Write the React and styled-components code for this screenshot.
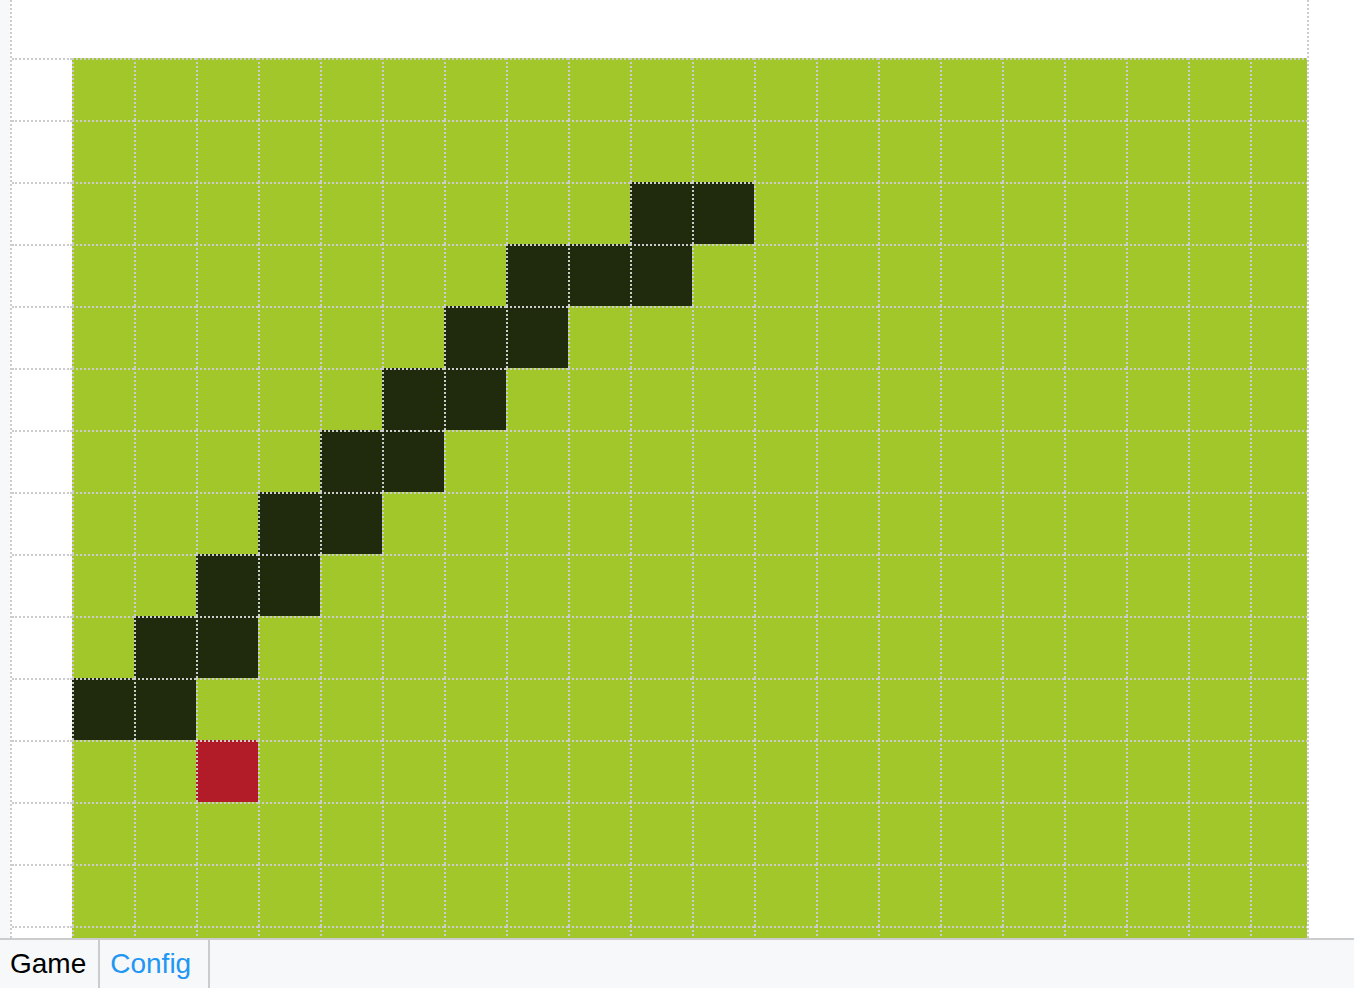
import React from "react";
import styled, { createGlobalStyle } from "styled-components";

const COLS = 21;
const ROWS = 15;
const SNAKE = [
  [2, 10], [2, 11],
  [3, 8], [3, 9], [3, 10],
  [4, 7], [4, 8],
  [5, 6], [5, 7],
  [6, 5], [6, 6],
  [7, 4], [7, 5],
  [8, 3], [8, 4],
  [9, 2], [9, 3],
  [10, 1], [10, 2],
];
const FOOD = [11, 3];

const GlobalStyle = createGlobalStyle`
  html, body {
    margin: 0;
    padding: 0;
    background: #ffffff;
    font-family: "Liberation Sans", Arial, sans-serif;
    overflow: hidden;
  }
`;

const Screen = styled.div`
  width: 1354px;
  height: 988px;
  display: flex;
  flex-direction: column;
`;

const Stage = styled.div`
  flex: 1;
  display: flex;
  min-height: 0;
`;

const Gutter = styled.div`
  width: 10px;
  background: #f7f8fa;
`;

const Board = styled.div`
  width: 1295px;
  border-left: 2px dotted #cccccc;
  border-right: 2px dotted #cccccc;
  padding-top: 58px;
  overflow: hidden;
  background: #ffffff;
`;

const Row = styled.div`
  display: flex;
  height: 62px;
`;

const colors = {
  empty: "#ffffff",
  field: "#a2c72b",
  snake: "#202a0c",
  food: "#b11c28",
};

const Cell = styled.div`
  flex: 0 0 ${(p) => (p.$first ? "60px" : "62px")};
  height: 62px;
  box-sizing: border-box;
  border-top: 2px dotted #cccccc;
  border-left: ${(p) => (p.$first ? "none" : "2px dotted #cccccc")};
  background: ${(p) => colors[p.$kind]};
`;

const TabBar = styled.nav`
  height: 48px;
  display: flex;
  background: #f7f8fa;
  border-top: 2px solid #cccccc;
`;

const Tab = styled.div`
  display: flex;
  align-items: center;
  padding: 0 ${(p) => p.$padRight}px 0 10px;
  font-size: 28px;
  color: ${(p) => (p.$active ? "#000000" : "#2196f3")};
  border-right: 2px solid #cccccc;
`;

function kindOf(r, c) {
  if (c === 0) return "empty";
  if (r === FOOD[0] && c === FOOD[1]) return "food";
  if (SNAKE.some(([sr, sc]) => sr === r && sc === c)) return "snake";
  return "field";
}

export default function App() {
  return (
    <>
      <GlobalStyle />
      <Screen>
        <Stage>
          <Gutter />
          <Board>
            {Array.from({ length: ROWS }, (_, r) => (
              <Row key={r}>
                {Array.from({ length: COLS }, (_, c) => (
                  <Cell key={c} $first={c === 0} $kind={kindOf(r, c)} />
                ))}
              </Row>
            ))}
          </Board>
        </Stage>
        <TabBar>
          <Tab $active $padRight={12}>Game</Tab>
          <Tab $padRight={17}>Config</Tab>
        </TabBar>
      </Screen>
    </>
  );
}
